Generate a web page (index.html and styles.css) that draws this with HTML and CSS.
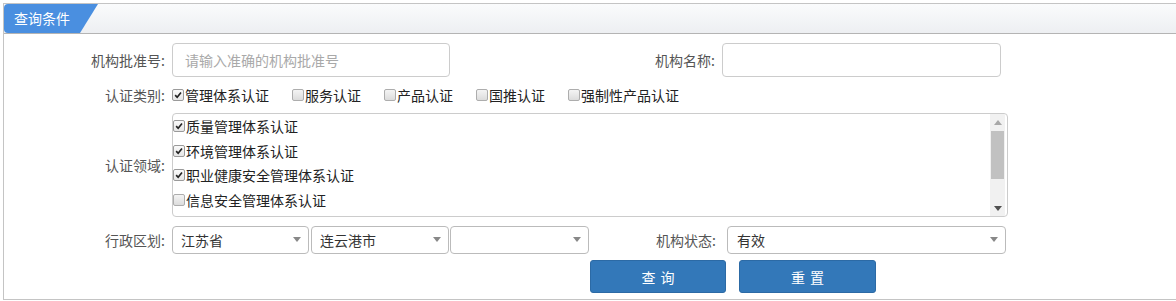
FILE: index.html
```html
<!DOCTYPE html>
<html lang="zh-CN">
<head>
<meta charset="utf-8">
<title>查询条件</title>
<link rel="stylesheet" href="styles.css">
</head>
<body>
<div class="panel">
  <div class="panel-head"><div class="tab">查询条件</div></div>
  <div class="panel-body">
    <div class="row r1">
      <label class="lbl">机构批准号:</label>
      <input class="txt w1" type="text" placeholder="请输入准确的机构批准号">
      <label class="lbl lbl2">机构名称:</label>
      <input class="txt w2" type="text">
    </div>
    <div class="row r2">
      <label class="lbl">认证类别:</label>
      <div class="cbs">
        <span class="opt"><span class="cb on"><svg viewBox="0 0 12 12"><path d="M2.6 6.2 L5 8.8 L9.6 3" /></svg></span>管理体系认证</span>
        <span class="opt"><span class="cb"></span>服务认证</span>
        <span class="opt"><span class="cb"></span>产品认证</span>
        <span class="opt"><span class="cb"></span>国推认证</span>
        <span class="opt"><span class="cb"></span>强制性产品认证</span>
      </div>
    </div>
    <div class="row r3">
      <label class="lbl">认证领域:</label>
      <div class="listbox">
        <div class="items">
          <div class="item"><span class="cb on"><svg viewBox="0 0 12 12"><path d="M2.6 6.2 L5 8.8 L9.6 3" /></svg></span>质量管理体系认证</div>
          <div class="item"><span class="cb on"><svg viewBox="0 0 12 12"><path d="M2.6 6.2 L5 8.8 L9.6 3" /></svg></span>环境管理体系认证</div>
          <div class="item"><span class="cb on"><svg viewBox="0 0 12 12"><path d="M2.6 6.2 L5 8.8 L9.6 3" /></svg></span>职业健康安全管理体系认证</div>
          <div class="item"><span class="cb"></span>信息安全管理体系认证</div>
        </div>
        <div class="sbar">
          <div class="sb-btn"><svg viewBox="0 0 8 5"><path d="M0 5 L4 0 L8 5 Z" fill="#a8a8a8"/></svg></div>
          <div class="sb-thumb"></div>
          <div class="sb-track"></div>
          <div class="sb-btn"><svg viewBox="0 0 8 5"><path d="M0 0 L8 0 L4 5 Z" fill="#505050"/></svg></div>
        </div>
      </div>
    </div>
    <div class="row r4">
      <label class="lbl">行政区划:</label>
      <div class="sel s1"><span>江苏省</span><svg viewBox="0 0 8 5"><path d="M0 0 L8 0 L4 5 Z" fill="#888"/></svg></div>
      <div class="sel s2"><span>连云港市</span><svg viewBox="0 0 8 5"><path d="M0 0 L8 0 L4 5 Z" fill="#888"/></svg></div>
      <div class="sel s3"><span></span><svg viewBox="0 0 8 5"><path d="M0 0 L8 0 L4 5 Z" fill="#888"/></svg></div>
      <label class="lbl lbl3">机构状态:</label>
      <div class="sel s4"><span>有效</span><svg viewBox="0 0 8 5"><path d="M0 0 L8 0 L4 5 Z" fill="#888"/></svg></div>
    </div>
    <div class="row r5">
      <button class="btn b1" type="button">查询</button>
      <button class="btn b2" type="button">重置</button>
    </div>
  </div>
</div>
</body>
</html>
```
FILE: styles.css
```css
* { box-sizing: border-box; }
body {
  margin: 0;
  font-family: "Noto Sans CJK SC", "Microsoft YaHei", sans-serif;
  font-size: 14px;
  color: #333;
  background: #fff;
}
.panel {
  margin: 3px 0 0 3px;
  height: 297px;
  border: 1px solid #c4c4c4;
  border-right: none;
  background: #fff;
}
.panel-head {
  height: 30px;
  border-bottom: 1px solid #b4b4b4;
  background: linear-gradient(#fafbfc, #edeff2);
}
.tab {
  width: 94px;
  height: 29px;
  line-height: 29px;
  padding-left: 10px;
  color: #fff;
  font-size: 14px;
  background: #4a8fe0;
  border-radius: 4px 0 0 4px;
  clip-path: polygon(0 0, 100% 0, calc(100% - 18px) 100%, 0 100%);
}
.panel-body {
  padding: 9px 0 0 61px;
}
.row {
  display: flex;
  align-items: center;
}
.lbl {
  width: 100px;
  flex: none;
  text-align: right;
  color: #555;
  margin-right: 7px;
  font-size: 14px;
}
.r1 { height: 34px; }
.txt {
  height: 34px;
  border: 1px solid #ccc;
  border-radius: 4px;
  padding: 0 12px;
  font-family: inherit;
  font-size: 14px;
  color: #333;
  outline: none;
}
.txt::placeholder { color: #a9a9a9; }
.w1 { width: 278px; }
.lbl2 { margin-left: 165px; }
.w2 { width: 279px; }

.r2 { height: 22px; margin-top: 7px; }
.cbs { display: flex; align-items: center; gap: 23px; }
.opt { display: flex; align-items: center; color: #222; }
.cb {
  width: 12px;
  height: 12px;
  flex: none;
  margin-right: 1px;
  border: 1px solid #adadad;
  border-radius: 2px;
  background: linear-gradient(#f4f4f4, #dcdcdc);
  display: inline-flex;
}
.cb.on { background: linear-gradient(#fafafa, #e6e6e6); border-color: #9a9a9a; }
.cb svg { width: 10px; height: 10px; }
.cb path { fill: none; stroke: #222; stroke-width: 2; }

.r3 { height: 104px; margin-top: 7px; }
.listbox {
  width: 836px;
  height: 104px;
  border: 1px solid #ccc;
  border-radius: 4px;
  display: flex;
}
.items { flex: 1; }
.item {
  height: 24.5px;
  display: flex;
  align-items: center;
  color: #222;
}
.sbar {
  width: 15px;
  margin-right: 2px;
  display: flex;
  flex-direction: column;
  background: #f1f1f1;
}
.sb-btn {
  height: 16px;
  display: flex;
  align-items: center;
  justify-content: center;
}
.sb-btn svg { width: 8px; height: 5px; }
.sb-thumb { height: 48px; background: #c1c1c1; margin: 1px 1px 0; }
.sb-track { flex: 1; }

.r4 { height: 27px; margin-top: 9px; }
.sel {
  height: 28px;
  border: 1px solid #bbb;
  border-radius: 4px;
  display: flex;
  align-items: center;
  justify-content: space-between;
  padding: 0 7px 0 8px;
  color: #333;
}
.sel svg { width: 8px; height: 5px; }
.s1 { width: 137px; }
.s2 { width: 138px; margin-left: 2px; }
.s3 { width: 139px; margin-left: 1px; }
.lbl3 { margin-left: 27px; margin-right: 11px; }
.s4 { width: 279px; padding-left: 9px; }

.r5 { height: 33px; margin-top: 7px; padding-left: 525px; }
.btn {
  width: 136px;
  height: 33px;
  background: #3378b9;
  border: 1px solid #2c6aa5;
  border-radius: 3px;
  color: #fff;
  font-family: inherit;
  font-size: 14px;
  letter-spacing: 5px;
  text-indent: 5px;
  padding: 0;
}
.b2 { margin-left: 13px; width: 137px; }
```
